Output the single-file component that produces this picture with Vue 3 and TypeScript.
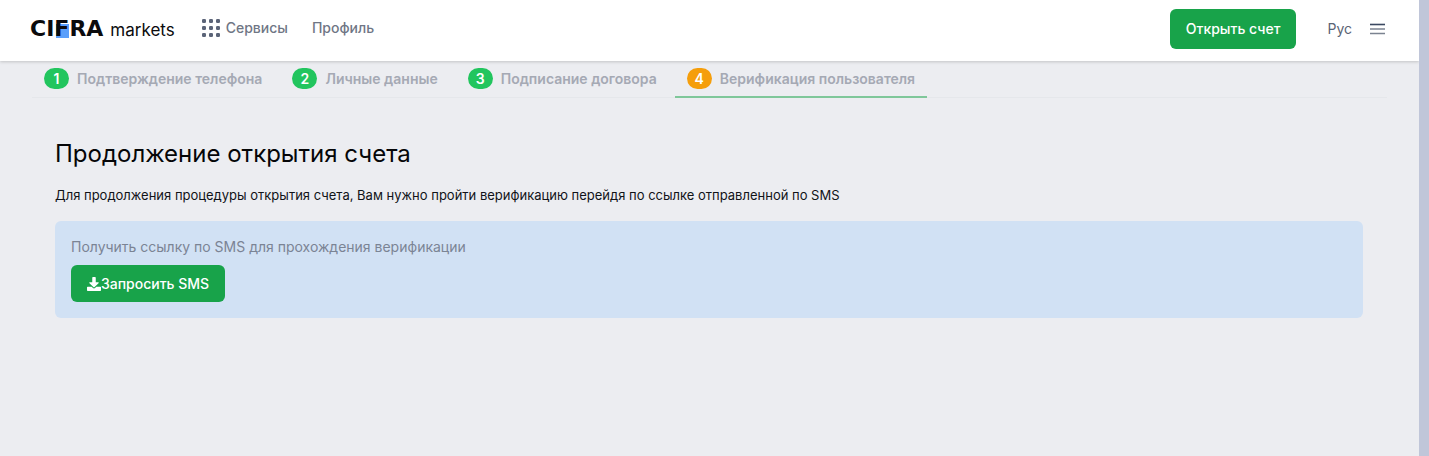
<script setup lang="ts">
interface Step {
  id: number
  label: string
  active: boolean
}

const steps: Step[] = [
  { id: 1, label: 'Подтверждение телефона', active: false },
  { id: 2, label: 'Личные данные', active: false },
  { id: 3, label: 'Подписание договора', active: false },
  { id: 4, label: 'Верификация пользователя', active: true },
]

const dots: number[] = [2, 9, 16]
</script>

<template>
  <div class="page">
    <div class="content">
      <header class="header">
        <a class="logo" href="#">
          <span class="brand">CI<span class="flag">F</span>RA</span>
          <span class="sub">markets</span>
        </a>
        <nav class="nav">
          <a class="link services" href="#">
            <svg width="20" height="20" viewBox="0 0 20 20" fill="#5b6478" aria-hidden="true">
              <template v-for="y in dots" :key="y">
                <rect v-for="x in dots" :key="x" :x="x - 1" :y="y - 1" width="4" height="4" rx="1.3" />
              </template>
            </svg>
            Сервисы
          </a>
          <a class="link" href="#">Профиль</a>
        </nav>
        <div class="actions">
          <button class="btn open" type="button">Открыть счет</button>
          <button class="lang" type="button">Рус</button>
          <button class="menu" type="button" aria-label="Меню">
            <svg width="16" height="12" viewBox="0 0 16 12" aria-hidden="true">
              <path d="M0 1.5h15" stroke="#3b4961" stroke-width="1.6" />
              <path d="M0 6h15M0 10.5h15" stroke="#7b8391" stroke-width="1.6" />
            </svg>
          </button>
        </div>
      </header>

      <nav class="steps">
        <a v-for="s in steps" :key="s.id" class="step" :class="{ active: s.active }" href="#">
          <span class="badge">{{ s.id }}</span>{{ s.label }}
        </a>
      </nav>

      <main class="main">
        <h1>Продолжение открытия счета</h1>
        <p class="lead">
          Для продолжения процедуры открытия счета, Вам нужно пройти верификацию перейдя по ссылке отправленной по SMS
        </p>
        <section class="card">
          <p>Получить ссылку по SMS для прохождения верификации</p>
          <button class="btn request" type="button">
            <svg width="14" height="14" viewBox="0 0 512 512" fill="currentColor" aria-hidden="true">
              <path d="M216 0h80c13.300 0 24 10.700 24 24v168h87.700c17.800 0 26.700 21.500 14.100 34.100L269.700 378.300c-7.500 7.500-19.800 7.500-27.300 0L90.100 226.100C77.500 213.500 86.400 192 104.200 192H192V24c0-13.300 10.700-24 24-24zm296 376v112c0 13.300-10.700 24-24 24H24c-13.300 0-24-10.700-24-24V376c0-13.300 10.700-24 24-24h146.700l49 49c20.100 20.100 52.500 20.100 72.600 0l49-49H488c13.300 0 24 10.700 24 24z" />
            </svg>Запросить SMS
          </button>
        </section>
      </main>
    </div>
    <div class="rail"></div>
  </div>
</template>

<style>
body {
  margin: 0;
  background: #ecedf1;
}
</style>

<style scoped>
.page {
  display: flex;
  min-height: 100vh;
  background: #ecedf1;
  font-family: Inter, "Liberation Sans", sans-serif;
  font-size: 14px;
  line-height: 20px;
  color: #111318;
}
.content {
  flex: 1;
  min-width: 0;
}
.rail {
  width: 10px;
  background: #c0c6d9;
}
a {
  color: inherit;
  text-decoration: none;
}
button {
  font: inherit;
  border: 0;
  padding: 0;
  background: none;
  cursor: pointer;
}
.header {
  display: flex;
  align-items: center;
  box-sizing: border-box;
  height: 61px;
  padding: 0 33px 4px 30px;
  background: #fff;
  box-shadow: 0 1px 3px rgba(0, 0, 0, 0.18);
}
.logo {
  display: flex;
  align-items: baseline;
  gap: 7px;
  color: #0b0b0d;
}
.brand {
  font: 700 22px/24px "DejaVu Sans", sans-serif;
}
.flag {
  background: linear-gradient(#5a9ffb, #5a9ffb) right 8px / 13px 14px no-repeat;
}
.sub {
  font-size: 17px;
}
.nav {
  display: flex;
  align-items: center;
  gap: 24px;
  margin-left: 26px;
  padding-bottom: 2px;
}
.link {
  font-weight: 500;
  color: #6f7685;
}
.services {
  display: flex;
  align-items: center;
  gap: 5px;
}
.actions {
  display: flex;
  align-items: center;
  margin-left: auto;
}
.btn {
  border-radius: 6px;
  background: #18a34a;
  color: #fff;
  font-weight: 500;
}
.open {
  height: 40px;
  padding: 0 16px;
}
.lang {
  margin: 0 18px 0 31px;
  color: #5b6475;
}
.menu {
  display: flex;
}
.steps {
  display: flex;
  gap: 6px;
  margin: 0 32px;
  border-bottom: 1px solid #e5e7eb;
}
.step {
  display: flex;
  align-items: center;
  gap: 8px;
  padding: 7px 12px;
  margin-bottom: -1px;
  border-bottom: 2px solid transparent;
  font-weight: 600;
  color: #a5a9b4;
}
.step.active {
  border-color: #7fc79a;
}
.badge {
  width: 25px;
  line-height: 21px;
  border-radius: 11px;
  background: #22c55e;
  color: #fff;
  text-align: center;
}
.active .badge {
  background: #f59e0b;
}
.main {
  padding: 40px 56px 0 55px;
}
h1 {
  margin: 0;
  font-size: 24px;
  line-height: 32px;
  font-weight: 400;
  color: #050608;
}
.lead {
  margin: 15px 0 16px;
  font-size: 13px;
}
.card {
  padding: 16px;
  border-radius: 6px;
  background: #d1e1f4;
}
.card p {
  margin: 0 0 8px;
  color: #7b8494;
}
.request {
  display: flex;
  align-items: center;
  height: 37px;
  padding: 0 16px;
}
</style>
